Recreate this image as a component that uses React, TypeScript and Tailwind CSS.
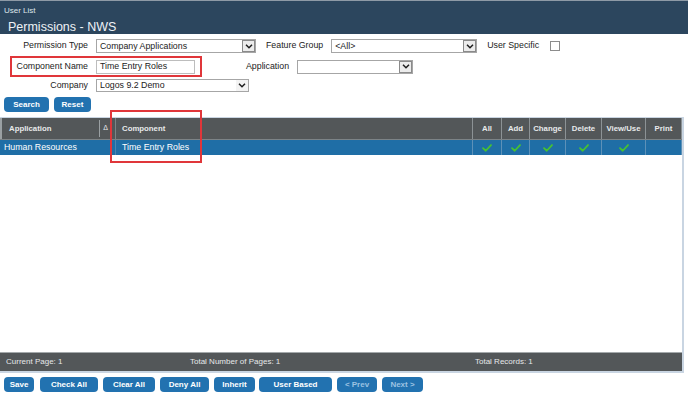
import React from 'react'

const Chevron = () => (
  <svg width="8" height="5" viewBox="0 0 8 5">
    <path d="M1 0.8 L4 3.8 L7 0.8" fill="none" stroke="#1e1e1e" strokeWidth="1.5" />
  </svg>
)

function Select({ text, width, boxed = true }: { text?: string; width: string; boxed?: boolean }) {
  return (
    <div className={`ml-[8px] h-full ${width} border border-[#a6a6a6] bg-white flex items-center justify-between`}>
      <span className="pl-[3px] text-[8.8px] leading-none text-[#222] whitespace-nowrap">{text}</span>
      {boxed ? (
        <span className="h-[12px] w-[13px] border border-[#8a8a8a] bg-[#ececec] flex items-center justify-center">
          <Chevron />
        </span>
      ) : (
        <span className="h-full w-[12px] bg-[#f3f3f3] flex items-center justify-center">
          <Chevron />
        </span>
      )}
    </div>
  )
}

const Check = () => (
  <svg width="10" height="8" viewBox="0 0 11 9">
    <path d="M1 4.6 L4.1 7.6 L10 1.2" fill="none" stroke="#46c232" strokeWidth="2" strokeLinecap="round" strokeLinejoin="round" />
  </svg>
)

function Btn({ label, w, dim = false }: { label: string; w: string; dim?: boolean }) {
  return (
    <div
      className={`${w} h-full rounded-[4px] bg-[#2272b0] flex items-center justify-center text-[8px] font-bold ${dim ? 'text-[#9cc2e2]' : 'text-white'}`}
    >
      {label}
    </div>
  )
}

const PERMS = [
  { label: 'All', w: 'w-[29px]', on: true },
  { label: 'Add', w: 'w-[28px]', on: true },
  { label: 'Change', w: 'w-[36px]', on: true },
  { label: 'Delete', w: 'w-[36px]', on: true },
  { label: 'View/Use', w: 'w-[44px]', on: true },
  { label: 'Print', w: 'w-[36px]', on: false },
]

export default function App() {
  return (
    <div className="w-[688px] h-[393px] bg-white overflow-hidden relative font-['Liberation_Sans',Arial,sans-serif] text-[#222]">
      {/* title bar */}
      <div className="h-[34px] bg-[#2c465e] border-t border-[#8e9aa6] px-[4px]">
        <div className="text-[8px] leading-[10px] pt-[5px] text-[#dfe6ec]">User List</div>
        <div className="text-[12.5px] leading-[16px] mt-[3px] pl-[4px] text-[#eef2f6]">Permissions - NWS</div>
      </div>

      {/* filters */}
      <div className="flex items-center h-[14px] mt-[5px] text-[8.8px]">
        <div className="w-[88px] text-right">Permission Type</div>
        <Select text="Company Applications" width="w-[160px]" />
        <span className="ml-[10px]">Feature Group</span>
        <Select text="<All>" width="w-[146px]" />
        <span className="ml-[10px]">User Specific</span>
        <span className="ml-[11px] w-[10px] h-[10px] border border-[#8c8c8c] bg-white" />
      </div>

      <div className="flex items-center h-[21px] mt-[3px] text-[8.8px]">
        <div className="ml-[10px] w-[192px] h-full border-2 border-[#e0363a] flex items-center">
          <div className="w-[76px] text-right">Component Name</div>
          <div className="ml-[8px] w-[99px] h-[14px] border border-[#bdbdbd] flex items-center pl-[3px]">Time Entry Roles</div>
        </div>
        <span className="ml-[44px]">Application</span>
        <div className="h-[14px] flex">
          <Select width="w-[116px]" />
        </div>
      </div>

      <div className="flex items-center h-[13px] mt-[2px] text-[8.8px]">
        <div className="w-[88px] text-right">Company</div>
        <Select text="Logos 9.2 Demo" width="w-[153px]" boxed={false} />
      </div>

      <div className="flex h-[15px] mt-[5px] pl-[4px] gap-[5px]">
        <Btn label="Search" w="w-[45px]" />
        <Btn label="Reset" w="w-[37px]" />
      </div>

      {/* grid */}
      <div className="mt-[5px] w-[684px] h-[256px] border-t border-r-2 border-b-2 border-[#c9d5e2] flex flex-col">
        <div className="h-[22px] bg-[#535759] flex text-[7.8px] font-bold text-[#e8eaeb] border-b border-[#7d8386]">
          <div className="w-[99px] flex items-center pl-[7px] border-l-2 border-[#9aa0a3]">Application</div>
          <div className="w-[13px] my-[2px] flex items-center justify-center border-l border-r border-[#9aa0a3] font-normal text-[7px]">Δ</div>
          <div className="w-[4px] border-r border-[#7d8386]" />
          <div className="w-[357px] flex items-center pl-[6px] border-r border-[#8c9295]">Component</div>
          {PERMS.map(p => (
            <div key={p.label} className={`${p.w} flex items-center justify-center border-r border-[#8c9295]`}>
              {p.label}
            </div>
          ))}
        </div>
        <div className="h-[15px] bg-[#1f6ea6] flex text-[8.8px] text-white">
          <div className="w-[116px] flex items-center pl-[4px] border-r border-[#4b86b2]">Human Resources</div>
          <div className="w-[357px] flex items-center pl-[6px] border-r border-[#5d91b8]">Time Entry Roles</div>
          {PERMS.map(p => (
            <div key={p.label} className={`${p.w} flex items-center justify-center border-r border-[#5d91b8]`}>
              {p.on && <Check />}
            </div>
          ))}
        </div>
        <div className="flex-1 bg-white" />
        <div className="h-[19px] bg-[#535759] flex items-center text-[8px] text-[#e6e8e9] border-t border-[#a4a9ab]">
          <span className="w-[190px] pl-[6px]">Current Page: 1</span>
          <span className="w-[285px]">Total Number of Pages: 1</span>
          <span>Total Records: 1</span>
        </div>
      </div>

      {/* actions */}
      <div className="flex h-[15px] mt-[4px] pl-[4px]">
        <Btn label="Save" w="w-[30px]" />
        <div className="w-[6px]" />
        <Btn label="Check All" w="w-[58px]" />
        <div className="w-[5px]" />
        <Btn label="Clear All" w="w-[52px]" />
        <div className="w-[5px]" />
        <Btn label="Deny All" w="w-[49px]" />
        <div className="w-[5px]" />
        <Btn label="Inherit" w="w-[41px]" />
        <div className="w-[4px]" />
        <Btn label="User Based" w="w-[73px]" />
        <div className="w-[5px]" />
        <Btn label="< Prev" w="w-[40px]" dim />
        <div className="w-[5px]" />
        <Btn label="Next >" w="w-[41px]" dim />
      </div>

      {/* annotation box */}
      <div className="absolute left-[110px] top-[110px] w-[92px] h-[53px] border-2 border-[#e0363a]" />
    </div>
  )
}
